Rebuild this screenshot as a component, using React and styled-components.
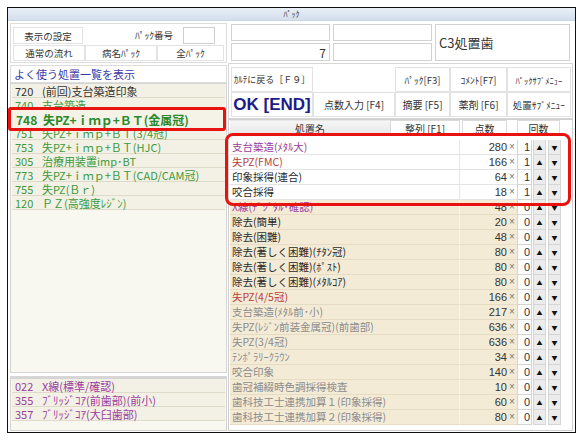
import React from 'react';
import styled, { createGlobalStyle } from 'styled-components';

const GlobalStyle = createGlobalStyle`
  html, body {
    margin: 0;
    padding: 0;
    background: #ffffff;
  }
  body {
    font-family: "Noto Sans CJK JP", "Liberation Sans", sans-serif;
    color: #222;
  }
  * { box-sizing: border-box; }
`;

const Window = styled.div`
  margin: 7px 0 0 7px;
  width: 569px;
  height: 426px;
  border: 1px solid #111;
  display: flex;
  flex-direction: column;
  background: #fff;
`;

const TitleBar = styled.div`
  height: 13px;
  background: linear-gradient(#e8eff7, #d3dfec);
  border-bottom: 1px solid #c9d5e2;
  font-size: 8px;
  line-height: 12px;
  text-align: center;
  color: #333;
`;

const Body = styled.div`
  flex: 1;
  min-height: 0;
  display: flex;
  gap: 1px;
  padding: 1px 2px 1px 2px;
`;

const LeftCol = styled.div`
  width: 217px;
  display: flex;
  flex-direction: column;
`;

const RightCol = styled.div`
  width: 345px;
  display: flex;
  flex-direction: column;
`;

const TopPanel = styled.div`
  margin-top: 1px;
  height: 40px;
  border: 1px solid #dcdcdc;
  padding: 3px 2px;
  display: flex;
  flex-direction: column;
  gap: 1px;
`;

const PanelRow = styled.div`
  display: flex;
  height: ${(p) => p.$h}px;
`;

const Cell = styled.div`
  width: ${(p) => (p.$w ? `${p.$w}px` : 'auto')};
  flex: ${(p) => (p.$w ? 'none' : 1)};
  border: 1px solid #e3e3e3;
  background: #fff;
  font-size: 9.5px;
  color: #333;
  display: flex;
  align-items: center;
  justify-content: center;
`;

const FieldLabel = styled.div`
  flex: 1;
  text-align: right;
  padding-right: 10px;
  font-size: 9.5px;
  line-height: 17px;
  color: #333;
`;

const SmallInput = styled.div`
  width: 32px;
  border: 1px solid #cfcfcf;
  background: #fff;
  margin-right: 9px;
`;

const ListHeader = styled.div`
  margin-top: 2px;
  height: 18px;
  border: 1px solid #dcdcdc;
  background: #fff;
  color: #3a3aa6;
  font-size: 11px;
  line-height: 16px;
  padding-left: 3px;
`;

const ListBox = styled.div`
  flex: ${(p) => (p.$grow ? 1 : 'none')};
  height: ${(p) => (p.$grow ? 'auto' : `${p.$h}px`)};
  background: #f8f7f0;
  border: 1px solid #d4d4d4;
  padding: 0 1px;
`;

const Splitter = styled.div`
  height: 5px;
  border-bottom: 2px solid #d6d6d6;
`;

const toneColor = {
  dark: '#333333',
  green: '#3d9a3d',
  purple: '#9a3c9e',
  red: '#b8413a',
  black: '#2a2a2a',
  gray: '#8c8c8c',
};

const ListRow = styled.div`
  position: relative;
  height: 14px;
  border-bottom: 1px solid #dedbca;
  background: #f3f1e5;
  display: flex;
  align-items: center;
  padding-left: 3px;
  font-size: 11px;
  color: ${(p) => toneColor[p.$tone]};
  white-space: nowrap;
`;

const RowNo = styled.span`
  width: 27px;
  flex: none;
`;

/* enlarged call-out laid over the picked row */
const LeftCallout = styled.div`
  position: absolute;
  z-index: 1;
  top: -5px;
  left: -4px;
  width: 218px;
  height: 24px;
  border: 3px solid #e8120f;
  border-radius: 3px;
  background: #f5f3e8;
  display: flex;
  align-items: center;
  padding-left: 5px;
  font-size: 12px;
  font-weight: bold;
  color: #2a8a2a;
  white-space: nowrap;
`;

const InfoGrid = styled.div`
  margin-top: 2px;
  padding-left: 3px;
  display: grid;
  grid-template-columns: 99px 99px 135px;
  grid-template-rows: 17px 18px;
  column-gap: 3px;
  row-gap: 2px;
`;

const InfoBox = styled.div`
  border: 1px solid #d2d2d2;
  background: #fff;
  font-size: ${(p) => (p.$big ? 13 : 12)}px;
  color: #333;
  display: flex;
  align-items: center;
  justify-content: ${(p) => (p.$right ? 'flex-end' : 'flex-start')};
  padding: 0 3px;
  grid-row: ${(p) => (p.$tall ? 'span 2' : 'auto')};
`;

const ButtonPanel = styled.div`
  margin-top: 2px;
  border: 1px solid #d6d6d6;
  padding: 3px 2px 1px 2px;
  display: grid;
  grid-template-columns: 82px 82px 55px 57px 64px;
  grid-template-rows: 25px 25px;
  background: #fff;
`;

const KeyButton = styled.div`
  border: 1px solid #e2e2e2;
  background: #fff;
  display: flex;
  align-items: center;
  justify-content: center;
  font-size: ${(p) => p.$size || 9.5}px;
  font-weight: ${(p) => (p.$bold ? 'bold' : 'normal')};
  font-family: ${(p) => (p.$bold ? '"Liberation Sans", "Noto Sans CJK JP", sans-serif' : 'inherit')};
  color: ${(p) => (p.$bold ? '#1b1b88' : '#333')};
  white-space: nowrap;
`;

const Blank = styled.div`
  background: #fff;
`;

const TablePanel = styled.div`
  position: relative;
  flex: 1;
  border: 1px solid #cfcfcf;
  padding: 0 11px 0 1px;
  display: flex;
  flex-direction: column;
`;

const HeaderRow = styled.div`
  display: flex;
  height: 16px;
  margin-bottom: 4px;
  font-size: 10px;
  color: #333;
`;

const HeadCell = styled.div`
  width: ${(p) => p.$w}px;
  margin-left: ${(p) => p.$ml || 0}px;
  border: 1px solid ${(p) => (p.$plain ? 'transparent' : '#dadada')};
  background: ${(p) => (p.$shade ? 'linear-gradient(#f6f6f6, #e7e7e7)' : '#fff')};
  display: flex;
  align-items: center;
  justify-content: center;
`;

const DataRow = styled.div`
  display: flex;
  height: 15px;
  font-size: 10.5px;
`;

const NameCell = styled.div`
  width: 230px;
  background: ${(p) => (p.$tan ? '#f3ebd6' : '#fff')};
  border-bottom: 1px solid ${(p) => (p.$tan ? '#e6dcc3' : '#e4e4e4')};
  border-right: 1px solid ${(p) => (p.$tan ? '#faf5ea' : '#e6e6e6')};
  color: ${(p) => toneColor[p.$tone]};
  padding-left: 2px;
  line-height: 14px;
  white-space: nowrap;
  overflow: hidden;
`;

const PointCell = styled.div`
  width: 47px;
  background: ${(p) => (p.$tan ? '#f3ebd6' : '#fff')};
  border-bottom: 1px solid ${(p) => (p.$tan ? '#e6dcc3' : '#e4e4e4')};
  text-align: right;
  font-family: "Liberation Sans", sans-serif;
  font-size: 11px;
  line-height: 14px;
  color: #333;
`;

const TimesCell = styled.div`
  width: 10px;
  background: ${(p) => (p.$tan ? '#f3ebd6' : '#fff')};
  border-bottom: 1px solid ${(p) => (p.$tan ? '#e6dcc3' : '#e4e4e4')};
  font-family: "Liberation Sans", sans-serif;
  font-size: 10px;
  line-height: 14px;
  text-align: center;
  color: #777;
`;

const CountBox = styled.div`
  width: 15px;
  background: #fff;
  border: 1px solid #d4d4d4;
  border-top: none;
  text-align: right;
  padding-right: 1px;
  font-family: "Liberation Sans", sans-serif;
  font-size: 11px;
  line-height: 14px;
  color: #333;
`;

const ArrowBtn = styled.div`
  width: 13px;
  margin-left: ${(p) => p.$ml}px;
  background: #ececec;
  border: 1px solid #d6d6d6;
  border-top: none;
  display: flex;
  align-items: center;
  justify-content: center;
  font-size: 6px;
  color: #111;
`;

const RightCallout = styled.div`
  position: absolute;
  top: 13px;
  left: -4px;
  width: 346px;
  height: 73px;
  border: 3px solid #e8120f;
  border-radius: 8px;
  pointer-events: none;
`;

const favorites = [
  { no: '720', name: '(前回)支台築造印象', tone: 'dark' },
  { no: '740', name: '支台築造', tone: 'green' },
  { no: '748', name: '失PZ+ｉｍｐ+ＢＴ(金属冠)', tone: 'green', picked: true },
  { no: '751', name: '失PZ+ｉｍｐ+ＢＴ(3/4冠)', tone: 'green' },
  { no: '753', name: '失PZ+ｉｍｐ+ＢＴ(HJC)', tone: 'green' },
  { no: '305', name: '治療用装置imp･BT', tone: 'green' },
  { no: '773', name: '失PZ+ｉｍｐ+ＢＴ(CAD/CAM冠)', tone: 'green' },
  { no: '755', name: '失PZ(Ｂｒ)', tone: 'green' },
  { no: '120', name: 'ＰＺ(高強度ﾚｼﾞﾝ)', tone: 'green' },
];

const diseaseRows = [
  { no: '022', name: 'X線(標準/確認)' },
  { no: '355', name: 'ﾌﾞﾘｯｼﾞｺｱ(前歯部)(前小)' },
  { no: '357', name: 'ﾌﾞﾘｯｼﾞｺｱ(大臼歯部)' },
];

const items = [
  { name: '支台築造(ﾒﾀﾙ大)', pts: 280, count: 1, tone: 'purple' },
  { name: '失PZ(FMC)', pts: 166, count: 1, tone: 'red' },
  { name: '印象採得(連合)', pts: 64, count: 1, tone: 'black' },
  { name: '咬合採得', pts: 18, count: 1, tone: 'black' },
  { name: 'X線(ﾃﾞｼﾞﾀﾙ･確認)', pts: 48, count: 0, tone: 'purple' },
  { name: '除去(簡単)', pts: 20, count: 0, tone: 'black' },
  { name: '除去(困難)', pts: 48, count: 0, tone: 'black' },
  { name: '除去(著しく困難)(ﾁﾀﾝ冠)', pts: 80, count: 0, tone: 'black' },
  { name: '除去(著しく困難)(ﾎﾟｽﾄ)', pts: 80, count: 0, tone: 'black' },
  { name: '除去(著しく困難)(ﾒﾀﾙｺｱ)', pts: 80, count: 0, tone: 'black' },
  { name: '失PZ(4/5冠)', pts: 166, count: 0, tone: 'red' },
  { name: '支台築造(ﾒﾀﾙ前･小)', pts: 217, count: 0, tone: 'gray' },
  { name: '失PZ(ﾚｼﾞﾝ前装金属冠)(前歯部)', pts: 636, count: 0, tone: 'gray' },
  { name: '失PZ(3/4冠)', pts: 636, count: 0, tone: 'gray' },
  { name: 'ﾃﾝﾎﾟﾗﾘｰｸﾗｳﾝ', pts: 34, count: 0, tone: 'gray' },
  { name: '咬合印象', pts: 140, count: 0, tone: 'gray' },
  { name: '歯冠補綴時色調採得検査', pts: 10, count: 0, tone: 'gray' },
  { name: '歯科技工士連携加算１(印象採得)', pts: 60, count: 0, tone: 'gray' },
  { name: '歯科技工士連携加算２(印象採得)', pts: 80, count: 0, tone: 'gray' },
];

export default function App() {
  return (
    <>
      <GlobalStyle />
      <Window>
        <TitleBar>ﾊﾟｯｸ</TitleBar>
        <Body>
          <LeftCol>
            <TopPanel>
              <PanelRow $h={17}>
                <Cell $w={70}>表示の設定</Cell>
                <FieldLabel>ﾊﾟｯｸ番号</FieldLabel>
                <SmallInput />
              </PanelRow>
              <PanelRow $h={16}>
                <Cell $w={72}>通常の流れ</Cell>
                <Cell $w={72}>病名ﾊﾟｯｸ</Cell>
                <Cell>全ﾊﾟｯｸ</Cell>
              </PanelRow>
            </TopPanel>
            <ListHeader>よく使う処置一覧を表示</ListHeader>
            <ListBox $grow>
              {favorites.map((r) =>
                r.picked ? (
                  <ListRow key={r.no} $tone={r.tone}>
                    <LeftCallout>
                      <RowNo>{r.no}</RowNo>
                      {r.name}
                    </LeftCallout>
                  </ListRow>
                ) : (
                  <ListRow key={r.no} $tone={r.tone}>
                    <RowNo>{r.no}</RowNo>
                    {r.name}
                  </ListRow>
                )
              )}
            </ListBox>
            <Splitter />
            <ListBox $h={53}>
              {diseaseRows.map((r) => (
                <ListRow key={r.no} $tone="purple">
                  <RowNo>{r.no}</RowNo>
                  {r.name}
                </ListRow>
              ))}
            </ListBox>
          </LeftCol>

          <RightCol>
            <InfoGrid>
              <InfoBox />
              <InfoBox />
              <InfoBox $tall $big>C3処置歯</InfoBox>
              <InfoBox $right>7</InfoBox>
              <InfoBox />
            </InfoGrid>
            <ButtonPanel>
              <KeyButton $size={9}>ｶﾙﾃに戻る［Ｆ９］</KeyButton>
              <Blank />
              <KeyButton>ﾊﾟｯｸ[F3]</KeyButton>
              <KeyButton>ｺﾒﾝﾄ[F7]</KeyButton>
              <KeyButton $size={8.5}>ﾊﾟｯｸｻﾌﾞﾒﾆｭｰ</KeyButton>
              <KeyButton $bold $size={17}>OK [END]</KeyButton>
              <KeyButton $size={10}>点数入力 [F4]</KeyButton>
              <KeyButton $size={10}>摘要 [F5]</KeyButton>
              <KeyButton $size={10}>薬剤 [F6]</KeyButton>
              <KeyButton $size={9.5}>処置ｻﾌﾞﾒﾆｭｰ</KeyButton>
            </ButtonPanel>
            <TablePanel>
              <HeaderRow>
                <HeadCell $w={160} $shade $plain>処置名</HeadCell>
                <HeadCell $w={70}>整列 [F1]</HeadCell>
                <HeadCell $w={45} $ml={2}>点数</HeadCell>
                <HeadCell $w={43} $ml={10}>回数</HeadCell>
              </HeaderRow>
              {items.map((it) => {
                const tan = it.count === 0;
                return (
                  <DataRow key={it.name}>
                    <NameCell $tan={tan} $tone={it.tone}>{it.name}</NameCell>
                    <PointCell $tan={tan}>{it.pts}</PointCell>
                    <TimesCell $tan={tan}>×</TimesCell>
                    <CountBox>{it.count}</CountBox>
                    <ArrowBtn $ml={1}>▲</ArrowBtn>
                    <ArrowBtn $ml={2}>▼</ArrowBtn>
                  </DataRow>
                );
              })}
              <RightCallout />
            </TablePanel>
          </RightCol>
        </Body>
      </Window>
    </>
  );
}
